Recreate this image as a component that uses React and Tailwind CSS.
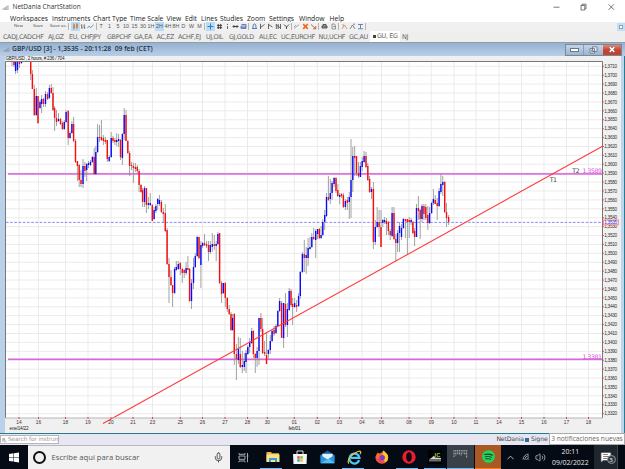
import React from 'react';
import { Mic, ChevronUp, Wifi, Volume2, MessageSquareText } from 'lucide-react';

// width = distance to the start of the next label
const MENU = [
    ['Workspaces', 42], ['Instruments', 41], ['Chart Type', 37], ['Time Scale', 36.5],
    ['View', 18.5], ['Edit', 16], ['Lines', 19], ['Studies', 27], ['Zoom', 22],
    ['Settings', 30], ['Window', 30.5], ['Help', 18],
];

const TABS = [
    ['CADJ,CADCHF', 45], ['AJ,GZ', 21], ['EU, CHFJPY', 38], ['GBPCHF', 27], ['GA,EA', 22.5],
    ['AC,EZ', 21.5], ['ACHF,EJ', 28], ['UJ,OIL', 23], ['GJ,GOLD', 30], ['AU,EC', 22],
    ['UC,EURCHF', 37.5], ['NU,UCHF', 30.5], ['GC,AU', 21],
];

const DAYS = [
    ['14', 19], ['16', 38.5], ['18', 65.5], ['19', 88], ['20', 111], ['21', 133], ['23', 152.5],
    ['25', 180.3], ['26', 202.5], ['27', 225], ['28', 247.5], ['30', 267.3], ['01', 294.3],
    ['02', 317.3], ['03', 339.5], ['04', 362], ['06', 381.5], ['08', 409], ['09', 431.3],
    ['10', 454], ['11', 476], ['14', 499], ['15', 521.5], ['16', 544], ['17', 566.5], ['18', 588.5],
];

const PRICES = Array.from({ length: 40 }, (_, i) => ({
    label: `1,${3710 - i * 10}`,
    y: 66.3 + i * 8.907,
}));

// x, high, low, body top, body bottom, up (1) or down (0)
const CANDLES = [
    [12, 61, 66, 61, 62, 0], [14, 61, 67, 61, 65, 0], [15.6, 61, 74, 61, 71, 1], [17.5, 61, 73, 61, 70, 1],
    [19.5, 61, 68, 61, 64, 0], [21.5, 61, 64, 61, 63, 1], [30.7, 61, 80, 61, 74, 0], [32.4, 70, 89, 74, 89, 0],
    [34.3, 85, 116, 89, 115, 0], [36.3, 88, 116, 96, 115, 1], [38, 96, 124, 96, 123, 0], [40, 100, 109, 102, 108, 1],
    [41.6, 95, 113, 99, 104, 1], [43.5, 98, 107, 99, 104, 0], [45.5, 91, 107, 94, 104, 1], [47.6, 92, 100, 94, 99, 0],
    [49.4, 85, 99, 88, 98, 1], [51.3, 84, 94, 88, 93, 0], [53, 87, 111, 93, 110, 0], [54.6, 106, 131, 108, 118, 0],
    [56.5, 110, 126, 118, 122, 0], [58.5, 113, 122, 119, 121, 1], [60.5, 118, 125, 119, 124, 0], [62.4, 121, 130, 123, 129, 0],
    [64.3, 120, 130, 122, 129, 1], [66.1, 110, 123, 112, 122, 1], [68.2, 110, 145, 111, 138, 0], [70, 131, 139, 133, 138, 1],
    [71.9, 121, 134, 124, 133, 1], [73.6, 117, 142, 124, 141, 0], [75.5, 139, 163, 141, 162, 0], [77.4, 161, 181, 161, 166, 0],
    [79.2, 164, 187, 165, 180, 0], [81, 170, 187, 180, 184, 0], [83, 159, 188, 166, 184, 1], [84.9, 162, 177, 166, 171, 0],
    [86.7, 163, 181, 164, 170, 1], [88.5, 161, 168, 163, 165, 1], [90.5, 160, 166, 162, 165, 1], [92.4, 156, 163, 157, 162, 1],
    [94.2, 148, 175, 157, 174, 0], [95.8, 146, 175, 152, 174, 1], [97.6, 124, 153, 137, 152, 1], [99.5, 125, 142, 137, 138, 0],
    [101.4, 120, 141, 137, 140, 0], [103.4, 135, 145, 138, 141, 0], [105.4, 137, 144, 140, 142, 0], [107.3, 140, 162, 140, 159, 0],
    [109.2, 155, 162, 157, 161, 1], [111.2, 132, 158, 138, 157, 1], [113, 136, 143, 138, 141, 0], [114.9, 138, 145, 140, 142, 0],
    [116.7, 133, 146, 140, 142, 1], [118.6, 134, 147, 139, 141, 1], [120.5, 139, 160, 140, 157, 0], [122.4, 133, 165, 134, 158, 1],
    [124.2, 108, 140, 115, 134, 1], [126, 110, 141, 115, 141, 0], [127.8, 140, 154, 141, 153, 0], [129.6, 151, 176, 153, 166, 0],
    [131.5, 162, 170, 165, 166, 0], [133.4, 163, 183, 166, 168, 0], [135.4, 163, 172, 167, 169, 0], [137.3, 165, 173, 167, 171, 0],
    [139.1, 169, 192, 171, 185, 0], [141, 184, 193, 185, 192, 0], [142.6, 188, 207, 190, 202, 0], [144.5, 186, 207, 188, 202, 1],
    [146.4, 188, 213, 188, 205, 0], [148.4, 197, 209, 203, 205, 1], [150.3, 193, 206, 203, 205, 1], [152.3, 204, 221, 205, 221, 0],
    [154.1, 207, 220, 210, 219, 1], [155.9, 204, 213, 206, 211, 1], [157.7, 198, 210, 199, 204, 1], [159.4, 195, 206, 200, 204, 1],
    [161.4, 200, 213, 202, 212, 0], [163.3, 208, 223, 212, 214, 0], [165.3, 204, 232, 213, 231, 0], [167.1, 228, 265, 230, 264, 0],
    [169, 258, 303, 264, 277, 0], [171, 270, 286, 277, 285, 0], [172.6, 285, 307, 285, 293, 0], [174.6, 267, 294, 269, 293, 1],
    [176.3, 261, 271, 267, 270, 1], [178.3, 261, 270, 264, 269, 1], [180.3, 262, 275, 263, 269, 0], [182.3, 268, 283, 269, 273, 0],
    [184.2, 269, 278, 270, 273, 0], [186.1, 262, 275, 268, 273, 1], [187.9, 256, 270, 268, 270, 0], [189.6, 268, 302, 269, 301, 0],
    [191.5, 279, 309, 283, 301, 1], [193.5, 258, 289, 267, 283, 1], [195.3, 253, 268, 256, 267, 1], [197.2, 236, 257, 237, 256, 1],
    [199, 237, 259, 237, 258, 0], [200.9, 241, 288, 245, 265, 1], [202.6, 242, 248, 243, 246, 1], [204.5, 234, 246, 243, 245, 0],
    [206.5, 241, 248, 244, 246, 0], [208.5, 241, 261, 245, 252, 0], [210.3, 241, 254, 245, 252, 1], [212.3, 233, 252, 244, 247, 1],
    [214.3, 235, 250, 244, 246, 0], [216.2, 241, 261, 244, 246, 1], [217.9, 232, 245, 234, 244, 1], [219.6, 233, 284, 233, 283, 0],
    [221.6, 281, 303, 283, 294, 0], [223.4, 283, 294, 283, 293, 1], [225.3, 282, 307, 283, 298, 0], [227.3, 297, 312, 298, 309, 0],
    [229.2, 305, 315, 309, 314, 0], [231, 312, 331, 314, 330, 0], [232.6, 314, 331, 318, 330, 1], [234.3, 313, 365, 314, 354, 0],
    [236.4, 344, 380, 354, 359, 0], [238.4, 337, 364, 349, 360, 1], [240.3, 338, 368, 354, 367, 0], [242.3, 351, 373, 365, 367, 1],
    [244.3, 353, 371, 361, 367, 1], [246, 350, 373, 353, 362, 1], [247.8, 345, 355, 347, 354, 1], [249.7, 338, 353, 342, 347, 1],
    [251.7, 328, 344, 331, 343, 1], [253.4, 330, 358, 331, 354, 0], [255.3, 353, 373, 354, 358, 0], [257.1, 347, 367, 351, 358, 1],
    [259, 318, 365, 318, 351, 1], [260.9, 313, 332, 318, 329, 0], [262.6, 318, 354, 329, 353, 0], [264.6, 341, 356, 352, 354, 0],
    [266.5, 333, 364, 355, 364, 0], [268.4, 349, 359, 350, 354, 1], [270.3, 335, 354, 341, 350, 1], [272.1, 329, 342, 331, 341, 1],
    [274.1, 326, 336, 330, 334, 0], [276, 324, 334, 326, 333, 1], [277.8, 310, 327, 311, 326, 1], [279.6, 298, 312, 301, 311, 1],
    [281.6, 301, 338, 303, 338, 0], [283.6, 303, 348, 303, 338, 1], [285.5, 293, 327, 304, 325, 0], [287.4, 303, 337, 309, 325, 1],
    [289.2, 288, 311, 291, 310, 1], [291, 289, 307, 291, 305, 0], [292.6, 298, 325, 304, 307, 0], [294.6, 298, 308, 303, 307, 1],
    [296.6, 300, 312, 305, 307, 0], [298.6, 293, 307, 296, 306, 1], [300.3, 271, 299, 272, 296, 1], [302.4, 252, 273, 254, 272, 1],
    [304.3, 240, 272, 254, 258, 0], [306.2, 247, 274, 255, 258, 1], [308.1, 238, 266, 248, 258, 1], [310, 237, 250, 247, 249, 1],
    [311.8, 233, 248, 237, 247, 1], [313.7, 228, 240, 237, 239, 0], [315.7, 229, 258, 231, 240, 1], [317.6, 229, 239, 229, 234, 1],
    [319.4, 228, 239, 229, 238, 0], [321.1, 226, 239, 235, 238, 1], [322.8, 219, 236, 222, 235, 1], [324.7, 210, 230, 215, 222, 1],
    [326.5, 193, 217, 197, 216, 1], [328.4, 176, 201, 197, 200, 0], [330.3, 179, 204, 193, 199, 1], [332.1, 181, 200, 183, 193, 1],
    [334.1, 177, 187, 178, 184, 1], [336, 177, 193, 178, 191, 0], [337.8, 184, 197, 190, 196, 0], [339.7, 193, 204, 195, 197, 1],
    [341.5, 193, 198, 194, 196, 0], [343.4, 193, 208, 195, 207, 0], [345.4, 199, 210, 201, 207, 1], [347.4, 197, 210, 200, 203, 0],
    [349.3, 192, 219, 197, 202, 1], [351, 139, 218, 180, 197, 1], [352.8, 147, 192, 156, 180, 1], [354.7, 146, 176, 156, 158, 0],
    [356.5, 156, 176, 156, 173, 0], [358.5, 162, 178, 173, 176, 0], [360.4, 162, 177, 166, 177, 1], [362.2, 157, 171, 161, 167, 1],
    [364.1, 151, 163, 156, 162, 1], [366, 152, 168, 156, 167, 0], [367.8, 163, 181, 166, 180, 0], [369.6, 176, 193, 179, 192, 0],
    [371.5, 187, 199, 189, 192, 1], [373.4, 182, 249, 189, 242, 0], [375.3, 220, 245, 227, 242, 1], [377.2, 207, 228, 222, 227, 1],
    [379.1, 210, 237, 222, 227, 0], [381, 210, 247, 227, 247, 0], [382.8, 219, 227, 220, 223, 1], [384.6, 217, 224, 220, 222, 1],
    [386.5, 218, 235, 221, 224, 0], [388.4, 221, 235, 222, 231, 0], [390.2, 229, 240, 231, 235, 0], [392.1, 207, 237, 213, 236, 1],
    [394, 207, 240, 213, 239, 0], [395.8, 234, 261, 239, 243, 0], [397.6, 230, 252, 233, 243, 1], [399.5, 222, 252, 226, 233, 1],
    [401.5, 224, 240, 228, 237, 1], [403.4, 218, 229, 219, 228, 1], [405.4, 219, 238, 219, 221, 0], [407.4, 219, 255, 219, 222, 0],
    [409.2, 217, 238, 220, 222, 0], [411.1, 218, 225, 220, 222, 1], [412.9, 221, 234, 222, 233, 0], [414.6, 228, 246, 231, 237, 0],
    [416.5, 204, 237, 208, 237, 1], [418.4, 196, 220, 208, 211, 0], [420.2, 209, 239, 210, 219, 0], [422, 204, 222, 206, 219, 1],
    [423.9, 204, 220, 206, 214, 0], [425.8, 204, 220, 207, 218, 0], [427.8, 206, 230, 215, 223, 0], [429.6, 207, 224, 213, 223, 1],
    [431.6, 202, 214, 203, 213, 1], [433.4, 189, 205, 199, 203, 1], [435.2, 195, 204, 200, 204, 0], [437.2, 198, 220, 203, 206, 0],
    [439.1, 188, 207, 191, 206, 1], [440.9, 174, 194, 184, 192, 1], [442.8, 176, 196, 182, 185, 1], [444.7, 181, 213, 182, 212, 0],
    [446.5, 203, 227, 212, 218, 0], [448.6, 215, 225, 217, 222, 0],
];

const Sep = ({ w }) => (
    <span className="flex shrink-0 justify-center" style={{ width: w }}>
        <span className="h-[7px] w-px bg-[#b5b5b5]" />
    </span>
);

const Cell = ({ w, on, children }) => (
    <span
        className={
            'flex h-full shrink-0 items-center justify-center whitespace-nowrap ' +
            (on ? 'bg-[#b9dbf5]' : '')
        }
        style={{ width: w }}
    >
        {children}
    </span>
);

const Glyph = ({ d, color = '#555', w = 8 }) => (
    <Cell w={w}>
        <svg className="h-[7px] w-[7px]" viewBox="0 0 7 7" fill="none" stroke={color} strokeWidth="0.9">
            <path d={d} />
        </svg>
    </Cell>
);

const Bars = ({ className }) => (
    <svg className={className} viewBox="0 0 8 6" stroke="#8b939c" strokeWidth="0.9">
        <path d="M1 6V4M2.5 6V3M4 6V2.5M5.5 6V1M7 6V0.5" />
    </svg>
);

const Toolbar = () => (
    <div className="flex h-[9px] shrink-0 items-center bg-[#f0f0f0] font-['Liberation_Sans',sans-serif] text-[4.4px] leading-none text-[#555]">
        <div className="flex h-full w-[97px] shrink-0 items-center pl-[13px]">
            <Cell w={11}>New</Cell>
            <Cell w={28}>Save</Cell>
            <Cell w={14}>Save as..</Cell>
            <Sep w={5} />
            <Cell w={9} on>
                <svg className="h-[7px] w-[7px]" viewBox="0 0 7 7">
                    <path d="M2 0.5V6.5M5 0V6" stroke="#666" strokeWidth="0.5" />
                    <path d="M2 1.5V5.5M5 1V5" stroke="#e8762c" strokeWidth="1.6" />
                </svg>
            </Cell>
            <Glyph d="M2 1V6M2 2H1M2 5H3.2M5 1V6M5 3H4M5 5.2H6.2" w={6} />
            <Glyph d="M0.3 5.2L2.2 3L3.6 4.6L6.7 1.8" color="#4d8fc0" w={9} />
            <Sep w={2} />
        </div>
        <div className="flex h-full flex-1 items-center text-[5.3px]">
            <Cell w={8}>T</Cell>
            <Cell w={9}>1</Cell>
            <Cell w={8}>5</Cell>
            <Cell w={8}>10</Cell>
            <Cell w={9}>15</Cell>
            <Cell w={8}>30</Cell>
            <Cell w={8}>1H</Cell>
            <Cell w={9} on>2H</Cell>
            <Cell w={8}>4H</Cell>
            <Cell w={8}>8H</Cell>
            <Cell w={7}>D</Cell>
            <Cell w={9}>W</Cell>
            <Cell w={7}>M</Cell>
            <Sep w={3} />
            <Cell w={9} on>
                <svg className="h-[7px] w-[7px]" viewBox="0 0 7 7" stroke="#2e7dbd">
                    <path d="M3.5 0.5V6.5M0.5 3.5H6.5" />
                </svg>
            </Cell>
            <Glyph d="M2.3 1V6M4.7 1V6M1 2.4H6M1 4.7H6" color="#333" />
            <Glyph d="M3.5 1V2M3.5 3V6" />
            <Glyph d="M0.5 3.5H6.5M2 2.2V4.8M5 2.2V4.8" color="#333" />
            <Glyph d="M1.5 1.5H6V5.5H1V3H6M1 4.4H6" color="#5a74b8" />
            <Sep w={3} />
            <Glyph d="M1 5.5H6M2 5C2 2 2.4 1 3.5 1S5 2 5 5" color="#3f75ad" />
            <Glyph d="M1.5 0.8V6M1.5 4.5L5.5 1.5" />
            <Glyph d="M1.5 0.8V6M1.5 1.5L5.5 4" />
            <Glyph d="M1.3 1V6M3.2 1V6M5.5 1V6M1.3 2L5.5 5" />
            <Glyph d="M1 1.5L3.5 4L6 1.5M3.5 4V6" color="#333" />
            <Sep w={2} />
            <Glyph d="M1 5.5L6 1.5M1 4L3 2" color="#a0a0a0" w={9} />
            <Cell w={8}>
                <svg className="h-[7px] w-[7px]" viewBox="0 0 7 7" stroke="#ee6a1f" strokeWidth="1.7">
                    <path d="M1.2 1.2L5.8 5.8M5.8 1.2L1.2 5.8" />
                </svg>
            </Cell>
            <Glyph d="M1 1.5L5.5 5.5M5.8 3V5.8H3" color="#c0562a" />
            <Sep w={3} />
            <Glyph d="M1 3H6V5H1ZM2 3V1.5H5V3M1 4H6" color="#444" w={9} />
            <Glyph d="M2 1H4.5L5.5 2.5V6H2ZM3 3.5H5" color="#888" />
            <Sep w={3} />
            <Glyph d="M1 6L3.5 2L6 6M1 2H3" color="#d58a5c" />
            <Glyph d="M1 6L3.5 2L6 6M4 1.2H6" color="#777" />
            <Glyph d="M1 1.5H6M3.5 1.5V5.5M1 5.8H6" color="#4d7fb0" />
            <Sep w={2} />
            <span className="ml-auto flex h-[8px] w-[8px] items-center justify-center bg-[#c2dff5]">
                <span className="h-[4px] w-[4px] border border-[#8aa5ba] bg-white" />
            </span>
        </div>
    </div>
);

const Chart = () => (
    <svg
        className="block h-[377px] w-[616px] shrink-0 bg-[#f0f0f0]"
        viewBox="5 56 616 377"
        fontFamily="'Liberation Sans', sans-serif"
    >
        <rect x="5.5" y="61.5" width="597" height="356.5" fill="#fff" />
        <g stroke="#e9e9e9" strokeWidth="0.9">
            {DAYS.map(([, x]) => (
                <path key={x} d={`M${x} 62V418`} />
            ))}
            {PRICES.map((p) => (
                <path key={p.label} d={`M6 ${p.y}H602`} />
            ))}
        </g>

        {/* Support, resistance and last price */}
        <path d="M8 173.9H603M8 359.3H603" stroke="#efb2ef" strokeWidth="2" />
        <path d="M8 173.9H603M8 359.3H603" stroke="#d652d6" strokeWidth="1" />
        <path d="M6 222.4H602" stroke="#7a7aff" strokeWidth="0.9" strokeDasharray="2.6 1.6" />

        {CANDLES.map(([x, high, low, top, bottom, up]) => (
            <g key={x}>
                <path d={`M${x} ${high}V${low}`} stroke="#8a8a8a" strokeWidth="0.8" />
                <rect
                    x={x - 0.7}
                    y={top}
                    width="1.4"
                    height={Math.max(bottom - top, 1)}
                    fill={up ? '#0a0aff' : '#ff0a0a'}
                />
            </g>
        ))}

        <path d="M103 423.5L603 146" stroke="#ff3c3c" strokeWidth="1.1" />

        <path d="M5.5 418V61.5H602.5V418" fill="none" stroke="#777" strokeWidth="1" />
        <path d="M5 418H603" stroke="#b5b5b5" strokeWidth="1.2" />

        <text x="5.5" y="60.2" fontSize="4.6" textLength="59" fill="#222">GBP/USD , 2 hours, # 236 / 704</text>

        {PRICES.map((p) => (
            <g key={p.label}>
                <path d={`M602 ${p.y}h2`} stroke="#e04545" strokeWidth="0.9" />
                <text x="604.3" y={p.y + 1.7} fontSize="4.7" textLength="12.8" fill="#333">{p.label}</text>
            </g>
        ))}
        <rect x="603.3" y="220" width="15" height="4.8" fill="#fff0f0" stroke="#ff7070" strokeWidth="0.8" />
        <text x="604.3" y="224.1" fontSize="4.7" textLength="12.8" fill="#3535e0">1,3535</text>

        {DAYS.map(([day, x]) => (
            <g key={x}>
                <path d={`M${x} 417v2`} stroke="#e04545" strokeWidth="1" />
                <text x={x} y="423.9" fontSize="4.8" textAnchor="middle" fill="#333">{day}</text>
            </g>
        ))}
        <text x="9.5" y="429.8" fontSize="4.6" textLength="19" fill="#222">ene/14/22</text>
        <text x="288.5" y="429.8" fontSize="4.6" textLength="12" fill="#222">feb/01</text>

        <g fontFamily="'DejaVu Sans', sans-serif" fontSize="6.2">
            <text x="572.2" y="173.2" textLength="7.5" fill="#444">T2</text>
            <text x="549.8" y="181.7" textLength="7.2" fill="#444">T1</text>
            <text x="582.5" y="173.2" textLength="19.5" fill="#d94fe0">1,3589</text>
            <text x="582.5" y="359" textLength="19.5" fill="#d94fe0">1,3381</text>
        </g>
    </svg>
);

const ChartWindow = () => (
    <div className="flex h-[392px] shrink-0 flex-col border-t border-[#9a9a9a] bg-[#b9d1ea]">
        <div className="flex h-[13px] shrink-0 items-center bg-linear-to-b from-[#95b2d3] to-[#b8cee7] pl-[3px] pr-[3px]">
            <Bars className="h-[5px] w-[7px]" />
            <span className="ml-[2px] flex-1 whitespace-pre font-['Open_Sans',sans-serif] text-[6.75px] font-semibold leading-none text-[#26313d]">
                GBP/USD [3] - 1,3535 - 20:11:28  09 feb (CET)
            </span>
            <div className="flex h-[12px] border border-[#7488a0]">
                <span className="flex w-[18px] items-center justify-center border-r border-[#8ba0b8] bg-linear-to-b from-[#c3d4e7] to-[#9db5d0]">
                    <span className="mt-px h-[2px] w-[7px] bg-white outline-[0.5px] outline-[#66788c]" />
                </span>
                <span className="flex w-[19px] items-center justify-center bg-linear-to-b from-[#c3d4e7] to-[#9db5d0]">
                    <svg className="h-[8px] w-[9px]" viewBox="0 0 9 8" fill="#e8edf3" stroke="#617184" strokeWidth="0.8">
                        <path d="M3.5 0.8H8V5.5H3.5ZM1 2.5H5.5V7.2H1Z" />
                        <path d="M2.7 4H4V5.6H2.7Z" />
                    </svg>
                </span>
                <span className="flex w-[18px] items-center justify-center bg-linear-to-b from-[#df8878] via-[#c9432c] to-[#bd4630]">
                    <svg className="h-[7px] w-[8px]" viewBox="0 0 8 7">
                        <path d="M1.7 1.2L6.3 5.8M6.3 1.2L1.7 5.8" stroke="#77433d" strokeWidth="2.6" />
                        <path d="M1.7 1.2L6.3 5.8M6.3 1.2L1.7 5.8" stroke="#fff" strokeWidth="1.7" />
                    </svg>
                </span>
            </div>
        </div>
        <div className="flex pl-[5px]">
            <Chart />
            <span className="w-[3px] bg-[#bdd6ee]" />
            <span className="w-px bg-[#277b90]" />
        </div>
        <div className="h-px bg-[#277b90]" />
    </div>
);

const TaskItem = ({ active, children }) => (
    <div className="flex h-full w-[27.3px] shrink-0 flex-col items-center">
        <div className="flex flex-1 items-center pt-px">{children}</div>
        <span className={'h-px w-[22px] ' + (active ? 'bg-[#76b9ed]' : '')} />
    </div>
);

const Taskbar = () => (
    <div className="flex h-[24px] shrink-0 bg-[#050b14] font-['Open_Sans',sans-serif]">
        <div className="flex w-[28px] items-center justify-center">
            <svg className="h-[11px] w-[10px]" viewBox="0 0 10 11" fill="#fff">
                <path d="M0 2L4.5 1.3V5.2H0ZM5 1.2L10 0.5V5.2H5ZM0 5.7H4.5V9.6L0 9ZM5 5.7H10V10.4L5 9.7Z" />
            </svg>
        </div>
        <div className="flex w-[202px] items-center border-t border-[#b8b8be] bg-[#f1f1f1] pl-[5px] pr-[6px]">
            <span className="h-[13px] w-[13px] rounded-full border-[2px] border-[#111]" />
            <span className="ml-[5.5px] flex-1 whitespace-nowrap text-[7.7px] leading-none text-[#555]">
                Escribe aquí para buscar
            </span>
            <Mic size={11} strokeWidth={2} className="text-[#444]" />
        </div>
        <div className="flex">
            <TaskItem>
                <svg className="h-[11px] w-[11px]" viewBox="0 0 11 11" fill="none" stroke="#b5b9be" strokeWidth="0.9">
                    <path d="M1 1V2.3H7V1M1 4H7V7.3H1ZM1 10.2V9H7V10.2M9.5 1V10.2M8.7 4H10.4" />
                </svg>
            </TaskItem>
            <TaskItem active>
                <svg className="ml-1 h-[12px] w-[14px]" viewBox="0 0 14 12">
                    <path d="M0.5 1H5L6 2.2H13V10.5H0.5Z" fill="#e8b84b" />
                    <path d="M0.5 3.4H13.5V11H0.5Z" fill="#fbe08a" />
                    <path d="M3 11V7H11V11H9V9H5V11Z" fill="#3b9cdb" />
                </svg>
            </TaskItem>
            <TaskItem>
                <svg className="ml-1 h-[15px] w-[14px]" viewBox="0 0 14 15">
                    <path d="M4 4V1H10V4" fill="none" stroke="#ddd" />
                    <path d="M0 4H14L13.5 14H0.5Z" fill="#f4f4f4" />
                    <path d="M4.3 6.2H6.7V8.7H4.3Z" fill="#e9502b" />
                    <path d="M7.3 6.2H9.7V8.7H7.3Z" fill="#7eb82c" />
                    <path d="M4.3 9.2H6.7V11.7H4.3Z" fill="#2d9fe3" />
                    <path d="M7.3 9.2H9.7V11.7H7.3Z" fill="#f8b718" />
                </svg>
            </TaskItem>
            <TaskItem>
                <svg className="ml-1 h-[14px] w-[15px]" viewBox="0 0 15 14">
                    <path d="M0.5 5L7.5 0.5L14.5 5V13H0.5Z" fill="#1760a8" />
                    <path d="M2.3 3.8H12.7V9H2.3Z" fill="#e3f1fa" />
                    <path d="M0.5 5L7.5 9.5L14.5 5V13.3H0.5Z" fill="#2a95df" />
                    <path d="M0.5 13.3L9 8.5L14.5 13.3Z" fill="#55bff3" />
                </svg>
            </TaskItem>
            <TaskItem active>
                <svg className="ml-1 h-[15px] w-[15px]" viewBox="0 0 15 15" fill="none">
                    <path d="M12.2 10.2A5 5 0 1 1 12.4 7.8H4" stroke="#4cc8f4" strokeWidth="2.3" />
                    <path d="M2 13.5C-1 10.5 5 3.5 11 1.5C14 0.5 14.3 2.2 13 4.2" stroke="#f4c530" strokeWidth="1.2" />
                </svg>
            </TaskItem>
            <TaskItem>
                <svg className="ml-1 h-[14px] w-[14px]" viewBox="0 0 14 14">
                    <path d="M2.5 2.5L4 3.5L6 3L8.5 0.5L11.5 3.5L13 6.5C14 11 10.5 13.7 7 13.7S0 11 0.5 6.5Z" fill="#f46b2d" />
                    <path d="M8.5 0.5L12.5 4.5C14.3 8 12 12 9.5 12L7.5 5Z" fill="#fdc631" />
                    <path d="M1 8C2 13 8 14 10.5 11L7 11.5L4 9Z" fill="#f33a68" />
                    <circle cx="7.2" cy="7.8" r="2.7" fill="#803ac7" />
                </svg>
            </TaskItem>
            <TaskItem active>
                <svg className="ml-1 h-[14px] w-[14px]" viewBox="0 0 14 14">
                    <path fillRule="evenodd" fill="#ed1c2e" d="M7 0.3A6.7 6.7 0 1 1 7 13.7A6.7 6.7 0 1 1 7 0.3ZM7 2.3C5.2 2.3 4.2 4.4 4.2 7S5.2 11.7 7 11.7S9.8 9.6 9.8 7S8.8 2.3 7 2.3Z" />
                </svg>
            </TaskItem>
            <TaskItem active>
                <svg className="h-[14px] w-[14px] bg-black" viewBox="0 0 14 14">
                    <path d="M1 9.5L4 7.5L6 5.5L7 7.5L13 8V9.5ZM1 10.5H13V11.3H1Z" fill="#d5d8d5" />
                    <text x="6.5" y="7" fontSize="6" fontWeight="700" fontFamily="'Liberation Sans', sans-serif" fill="#8fd43a">
                        IC
                    </text>
                </svg>
            </TaskItem>
        </div>
        <div className="-ml-px flex w-[27px] flex-col items-center bg-[#3a4048]">
            <svg className="mt-[4px] h-[13px] w-[15px] flex-none" viewBox="0 0 15 13" stroke="#9da1a5" strokeWidth="1.2" strokeDasharray="0.9 0.6">
                <path d="M1 1V8M2.8 1V7M4.6 1V5M6.4 1V6M8.2 1V6.5M10 1V4.5M11.8 1V6M13.6 1V9" />
            </svg>
            <span className="mt-auto h-px w-full bg-[#76b9ed]" />
        </div>
        <div className="ml-px flex w-[26px] flex-col items-center bg-[#a95a24]">
            <svg className="mt-[5px] h-[13px] w-[13px] flex-none" viewBox="0 0 13 13" fill="none" stroke="#123c1d" strokeLinecap="round">
                <circle cx="6.5" cy="6.5" r="6.3" fill="#1ed760" stroke="none" />
                <path d="M2.8 4.5C5.5 3.7 8.2 4 10.3 5.2" strokeWidth="1.2" />
                <path d="M3.2 6.8C5.4 6.1 7.7 6.4 9.6 7.4M3.6 8.9C5.4 8.4 7.2 8.6 8.8 9.5" strokeWidth="0.9" />
            </svg>
            <span className="mt-auto h-[1.5px] w-full bg-[#ff7b16]" />
        </div>
        <div className="flex flex-1 items-center text-[#c5c8cc]">
            <ChevronUp size={11} strokeWidth={2} className="ml-[4px]" />
            <Wifi size={9} strokeWidth={2} className="ml-[6px] -rotate-45" />
            <Volume2 size={11} strokeWidth={1.7} className="ml-[4px]" />
            <div className="ml-[3px] flex w-[42px] flex-col items-center pt-px text-[6.9px] leading-[10.5px] text-[#e8e8e8]">
                <span>20:11</span>
                <span>09/02/2022</span>
            </div>
            <div className="ml-auto flex h-full w-[24px] items-center justify-center border-r border-[#40464e] bg-[#20262e]">
                <div className="relative">
                    <MessageSquareText size={12} className="text-white" fill="#fff" stroke="#555" strokeWidth={1.5} />
                    <span className="absolute -right-[4px] top-[4px] flex h-[9px] w-[9px] items-center justify-center rounded-full border border-[#8e9399] bg-[#30363e] text-[6px] leading-none text-white">
                        3
                    </span>
                </div>
            </div>
            <span className="w-[7px]" />
        </div>
    </div>
);

export default function App() {
    return (
        <div className="flex h-[469px] w-[625px] flex-col overflow-hidden bg-white">
            <div className="flex h-[14px] shrink-0 items-center pl-[2px] font-['Open_Sans',sans-serif] text-[6.5px] leading-none text-[#333]">
                <Bars className="h-[5px] w-[7px]" />
                <span className="ml-[3.5px] flex-1">NetDania ChartStation</span>
                <svg className="mb-px h-[8px] w-[62px]" viewBox="0 0 62 8" fill="none" stroke="#555" strokeWidth="0.8">
                    <path d="M0.5 4.2H6.5M28 2.5H31.8V7H28ZM29 2.5V1.2H33V5.8H31.8M55.5 1.3L61 6.8M61 1.3L55.5 6.8" />
                </svg>
                <span className="w-[10px]" />
            </div>
            <div className="flex h-[8px] shrink-0 items-end whitespace-nowrap pl-[10px] font-['Open_Sans',sans-serif] text-[6.75px] leading-[7px] text-[#1a1a1a]">
                {MENU.map(([label, w]) => (
                    <span key={label} className="shrink-0" style={{ width: w }}>{label}</span>
                ))}
            </div>
            <Toolbar />
            <div className="flex h-[11px] shrink-0 items-center whitespace-nowrap bg-[#eeeeee] pl-[3px] font-['DejaVu_Sans',sans-serif] text-[6.4px] leading-none tracking-[-0.35px] text-[#666]">
                {TABS.map(([label, w]) => (
                    <span key={label} className="shrink-0 pt-px" style={{ width: w }}>{label}</span>
                ))}
                <span className="flex h-full w-[30px] shrink-0 items-center bg-white pl-[3px]">
                    <span className="mr-[1px] h-[3px] w-[3px] shrink-0 bg-[#444]" />
                    GU, EG
                </span>
                <span className="pl-[2px] pt-px">NJ</span>
            </div>
            <ChartWindow />
            <div className="flex h-[11px] shrink-0 bg-[#e7e7f3] font-['DejaVu_Sans',sans-serif] text-[6px] leading-none text-[#444]">
                <div className="mt-[1px] flex h-[9px] w-[59px] items-center whitespace-nowrap border border-[#b5b5b5] bg-white pl-px text-[5.8px] tracking-[-0.1px] text-[#999]">
                    <svg className="mr-[1px] h-[6px] w-[5px] shrink-0" viewBox="0 0 6 6" fill="none" stroke="#888" strokeWidth="0.8">
                        <path d="M1 5V1.2H3V3H1M3 3L5.5 5.2M2 5H4" />
                    </svg>
                    Search for instrun
                </div>
                <div className="ml-auto flex items-center whitespace-nowrap text-[6.1px] tracking-[-0.1px]">
                    <span>NetDania</span>
                    <span className="mx-[1px] h-[4px] w-[4px] bg-[#34699d]" />
                    <span className="ml-[1px] w-[18px]">Signe</span>
                </div>
                <div className="-mt-px flex h-[12px] w-[76px] items-center justify-center whitespace-nowrap border border-[#aaa] bg-white font-['Open_Sans',sans-serif] text-[6.6px] text-[#666]">
                    3 notificaciones nuevas
                </div>
            </div>
            <Taskbar />
        </div>
    );
}
